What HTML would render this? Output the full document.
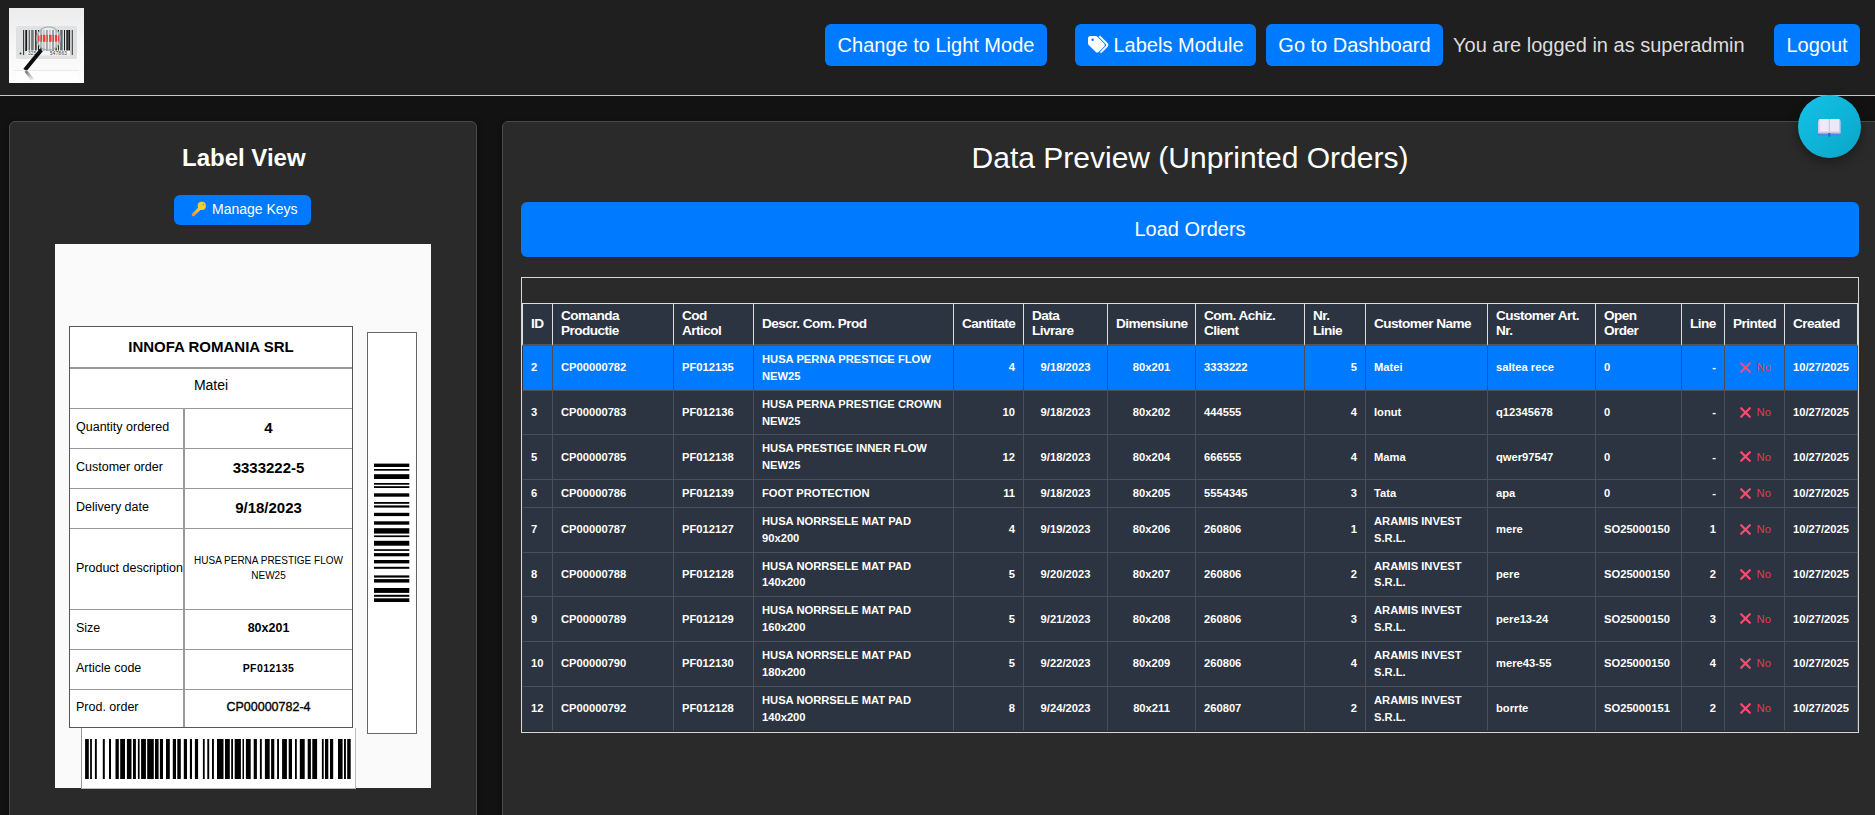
<!DOCTYPE html>
<html><head><meta charset="utf-8">
<style>
*{box-sizing:border-box}
html,body{margin:0;padding:0}
body{width:1875px;height:815px;overflow:hidden;background:#121212;font-family:"Liberation Sans",sans-serif;position:relative;color:#fff}
.hdr{position:absolute;left:0;top:0;width:1875px;height:95px;background:#1f1f1f}
.hline{position:absolute;left:0;top:95px;width:1875px;height:1px;background:#c8c8c8}
.logo{position:absolute;left:9px;top:8px;width:75px;height:75px}
.btn{position:absolute;top:24px;height:42px;background:#007bff;border-radius:6px;color:#fff;font-size:20px;line-height:42px;text-align:center;white-space:nowrap}
.who{position:absolute;left:1453px;top:24px;height:42px;line-height:42px;font-size:20px;color:#dcdcdc;white-space:nowrap}
.panel{position:absolute;top:121px;height:720px;background:#2a2a2a;border:1px solid #4a4a4a;border-radius:6px;box-shadow:0 2px 6px rgba(0,0,0,.35)}
.lp{left:9px;width:468px}
.rp{left:502px;width:1378px}
.ttl{position:absolute;font-weight:bold;font-size:24px;color:#fff;white-space:nowrap}
.mk{position:absolute;left:174px;top:195px;width:137px;height:30px;background:#007bff;border-radius:6px;font-size:14px;line-height:30px;color:#fff;white-space:nowrap}
.canvas{position:absolute;left:55px;top:244px;width:376px;height:544px;background:#fafafa}
.lt{position:absolute;left:69px;top:326px;width:284px;height:402px;background:#fff;border:1px solid #555}
.lt div{position:absolute;color:#000;white-space:nowrap}
.hl{position:absolute;left:0;height:1px;background:#999}
.vbox{position:absolute;left:367px;top:332px;width:50px;height:402px;background:#fff;border:1px solid #666}
.hbox{position:absolute;left:81px;top:728px;width:275px;height:61px;background:#fff;border:1px solid #bbb;border-left:1px solid #999;border-top:none}
.dp{position:absolute;left:521px;width:1338px;top:141px;text-align:center;font-size:30px;color:#fff;white-space:nowrap}
.load{position:absolute;left:521px;top:202px;width:1338px;height:55px;background:#007bff;border-radius:6px;font-size:20px;line-height:55px;text-align:center;color:#fff}
.tc{position:absolute;left:521px;top:277px;width:1338px;height:456px;border:1px solid #d8d8d8;background:#2a2a2a}
.fab{position:absolute;left:1798px;top:95px;width:62.5px;height:63px;border-radius:50%;background:linear-gradient(135deg,#13c3e8,#0aa5c7);box-shadow:0 4px 12px rgba(0,0,0,.35)}
.dt{position:absolute;left:522px;top:303px;border-collapse:separate;border-spacing:0;table-layout:fixed;width:1336px}
.dt th{background:#2b3440;color:#fff;font-weight:bold;font-size:13.6px;letter-spacing:-0.55px;line-height:15px;padding:4px 8px 6px;text-align:left;vertical-align:middle;border-top:1px solid #ddd;border-right:1px solid #ddd;border-bottom:2px solid #555}
.dt th:first-child{border-left:1px solid #ddd}
.dt td{background:#2b3440;color:#fff;font-weight:bold;font-size:11.2px;line-height:16.85px;padding:5px 8px;vertical-align:middle;border-right:1px solid #4a5058;border-bottom:1px solid #4a5058}
.dt td:first-child{border-left:1px solid #2f3742}
.dt tr.sel td{background:#007bff}
.dt tbody tr:last-child td{border-bottom-color:#2b3440}
.dt td.r{text-align:right}.dt td.c{text-align:center}.dt td.l{text-align:left}
.dt .x{vertical-align:-1.5px;margin-left:1.5px}
.dt .no{color:#e63950;font-weight:normal;margin-left:6px}
.lb{position:absolute;color:#000;white-space:nowrap;text-align:center}
.ll{position:absolute;left:76px;color:#000;font-size:12.5px;white-space:nowrap}
.hr{position:absolute;background:#999}
</style></head><body>
<div class="hdr"></div>
<div class="hline"></div>
<svg class="logo" viewBox="0 0 75 75">
<defs><linearGradient id="lg" x1="0" y1="0" x2="0" y2="1"><stop offset="0" stop-color="#ececec"/><stop offset="0.55" stop-color="#f7f7f7"/><stop offset="1" stop-color="#fdfdfd"/></linearGradient>
<radialGradient id="lens" cx="0.5" cy="0.5" r="0.5"><stop offset="0" stop-color="#ffffff" stop-opacity="0.55"/><stop offset="0.8" stop-color="#f4f8f8" stop-opacity="0.35"/><stop offset="1" stop-color="#b8c6c8" stop-opacity="0.9"/></radialGradient></defs>
<rect width="75" height="75" fill="url(#lg)"/>
<rect x="7" y="18" width="61" height="33" rx="2" fill="#dfe1e3"/>
<g fill="#1a1a1a"><rect x="14.2" y="22" width="0.9" height="25"/><rect x="16.3" y="22" width="1.8" height="21"/><rect x="19.8" y="22" width="0.8" height="21"/><rect x="22.1" y="22" width="2.6" height="21" fill="#777"/><rect x="26.2" y="22" width="1.4" height="21"/><rect x="29" y="22" width="1" height="21"/><rect x="31" y="22" width="2.2" height="21" fill="#555"/><rect x="34.5" y="22" width="0.9" height="21"/><rect x="37" y="22" width="1.8" height="21"/><rect x="40.5" y="22" width="0.9" height="21"/><rect x="43" y="22" width="2" height="21"/><rect x="46.5" y="22" width="1.2" height="21"/><rect x="49" y="22" width="0.9" height="21"/><rect x="51.2" y="22" width="2.4" height="21" fill="#666"/><rect x="55" y="22" width="1" height="21"/><rect x="57.3" y="22" width="1.6" height="21"/><rect x="59.3" y="22" width="1.8" height="25"/><rect x="62.8" y="22" width="0.9" height="25"/></g>
<rect x="18" y="42.5" width="43" height="5" fill="#f5f5f5"/>
<text x="19" y="47" font-family="Liberation Sans" font-size="4.6" fill="#333" letter-spacing="0.3">325</text><text x="41" y="47" font-family="Liberation Sans" font-size="4.6" fill="#333" letter-spacing="0.3">547863</text>
<circle cx="11.5" cy="45.5" r="0.9" fill="#333"/>
<circle cx="39.5" cy="30.5" r="11.3" fill="#f3f6f6" opacity="0.55"/>
<g fill="#ff1010"><rect x="28.5" y="27.5" width="2" height="6"/><rect x="31.5" y="26.8" width="1.6" height="7"/><rect x="34" y="26.8" width="2.4" height="7"/><rect x="37.5" y="26.8" width="1.4" height="7"/><rect x="40" y="26.8" width="2.6" height="7"/><rect x="43.6" y="26.8" width="1.5" height="7"/><rect x="46" y="27" width="2.2" height="6.6"/><rect x="49" y="27.5" width="1.8" height="6"/></g>
<circle cx="39.5" cy="30.5" r="11.6" fill="url(#lens)" fill-opacity="0.4" stroke="#a7b6b8" stroke-width="1.3"/>
<line x1="31" y1="43.5" x2="17.2" y2="60.5" stroke="#0d0d0d" stroke-width="4" stroke-linecap="square"/>
<rect x="7" y="62.6" width="61" height="11" fill="#ffffff" opacity=".6"/><line x1="5" y1="62.4" x2="70" y2="62.4" stroke="#d3dcdc" stroke-width="0.6"/><defs><linearGradient id="rf" x1="0" y1="0" x2="1" y2="1"><stop offset="0" stop-color="#333" stop-opacity=".85"/><stop offset="1" stop-color="#999" stop-opacity="0"/></linearGradient></defs><path d="M15.5 63.5L18.5 63L26 71.5L22 72.5Z" fill="url(#rf)"/>

</svg>
<div class="btn" style="left:825px;width:222px">Change to Light Mode</div>
<div class="btn" style="left:1075px;width:181px"><svg style="position:absolute;left:12px;top:11px" width="22" height="19" viewBox="0 0 22 19"><path d="M1 3.2C1 2 2 1 3.2 1H8.6C9.3 1 9.9 1.3 10.3 1.7L17.2 8.6C18 9.4 18 10.6 17.2 11.4L11.6 17C10.8 17.8 9.6 17.8 8.8 17L1.7 9.9C1.3 9.5 1 8.9 1 8.2Z" fill="#fff"/><circle cx="5.6" cy="4.8" r="1.25" fill="#007bff"/><path d="M12.3 1.2L19.6 8.5C20.5 9.4 20.5 10.6 19.6 11.5L13.5 17.6" stroke="#fff" stroke-width="1.9" fill="none"/></svg><span style="position:absolute;left:38.5px;top:0">Labels Module</span></div>
<div class="btn" style="left:1266px;width:177px">Go to Dashboard</div>
<div class="who">You are logged in as superadmin</div>
<div class="btn" style="left:1774px;width:86px">Logout</div>

<div class="panel lp"></div>
<div class="panel rp"></div>

<div class="ttl" style="left:182px;top:144px">Label View</div>
<div class="mk"><svg style="position:absolute;left:16px;top:6px" width="18" height="18" viewBox="0 0 18 18"><defs><linearGradient id="kg" x1="0" y1="1" x2="1" y2="0"><stop offset="0" stop-color="#ff8a3a"/><stop offset="0.6" stop-color="#fdb52e"/><stop offset="1" stop-color="#ffd93e"/></linearGradient></defs><path d="M10.2 6.8L3.4 13.6" stroke="url(#kg)" stroke-width="3.3" stroke-linecap="round"/><circle cx="11.8" cy="4.9" r="4.1" fill="#fdc936"/><circle cx="13.3" cy="3.6" r="0.8" fill="#4aa8c8"/></svg><span style="position:absolute;left:38px;top:-1px">Manage Keys</span></div>

<div class="canvas"></div>
<div class="lt"></div>
<div class="lb" style="left:70px;width:282px;top:327px;height:40px;line-height:40px;font-size:15px;font-weight:bold">INNOFA ROMANIA SRL</div>
<div class="hr" style="left:70px;width:282px;top:367px;height:2px"></div>
<div class="lb" style="left:70px;width:282px;top:366px;height:39px;line-height:39px;font-size:14px">Matei</div>
<div class="hr" style="left:70px;width:282px;top:408px;height:1px"></div>
<div class="hr" style="left:70px;width:282px;top:448px;height:1px"></div>
<div class="hr" style="left:70px;width:282px;top:488px;height:1px"></div>
<div class="hr" style="left:70px;width:282px;top:528px;height:1px"></div>
<div class="hr" style="left:70px;width:282px;top:609px;height:1px"></div>
<div class="hr" style="left:70px;width:282px;top:649px;height:1px"></div>
<div class="hr" style="left:70px;width:282px;top:689px;height:1px"></div>
<div class="hr" style="left:183px;width:2px;top:409px;height:318px"></div>
<div class="ll" style="top:408px;height:39px;line-height:39px">Quantity ordered</div>
<div class="lb" style="left:185px;width:167px;top:408px;height:39px;line-height:39px;font-size:15px;font-weight:bold">4</div>
<div class="ll" style="top:448px;height:39px;line-height:39px">Customer order</div>
<div class="lb" style="left:185px;width:167px;top:448px;height:39px;line-height:39px;font-size:15px;font-weight:bold">3333222-5</div>
<div class="ll" style="top:488px;height:39px;line-height:39px">Delivery date</div>
<div class="lb" style="left:185px;width:167px;top:488px;height:39px;line-height:39px;font-size:15px;font-weight:bold">9/18/2023</div>
<div class="ll" style="top:609px;height:39px;line-height:39px">Size</div>
<div class="lb" style="left:185px;width:167px;top:609px;height:39px;line-height:39px;font-size:12.5px;font-weight:bold">80x201</div>
<div class="ll" style="top:649px;height:39px;line-height:39px">Article code</div>
<div class="lb" style="left:185px;width:167px;top:649px;height:39px;line-height:39px;font-size:10.5px;font-weight:bold;letter-spacing:0.4px">PF012135</div>
<div class="ll" style="top:689px;height:37px;line-height:37px">Prod. order</div>
<div class="lb" style="left:185px;width:167px;top:689px;height:37px;line-height:37px;font-size:12.5px;-webkit-text-stroke:0.35px #000">CP00000782-4</div>
<div class="ll" style="top:528px;height:80px;line-height:80px">Product description</div>
<div class="lb" style="left:185px;width:167px;top:553px;line-height:15px;font-size:10px">HUSA PERNA PRESTIGE FLOW<br>NEW25</div>
<div class="vbox"><svg style="position:absolute;left:6.3px;top:130px" width="36" height="140" viewBox="0 0 36 140"><rect y="0.6" width="35.3" height="3.4"/><rect y="6.0" width="35.3" height="1.7"/><rect y="11.2" width="35.3" height="4.8"/><rect y="20.0" width="35.3" height="1.7"/><rect y="23.2" width="35.3" height="1.8"/><rect y="30.3" width="35.3" height="3.4"/><rect y="39.0" width="35.3" height="1.8"/><rect y="42.4" width="35.3" height="2.2"/><rect y="49.8" width="35.3" height="3.3"/><rect y="58.3" width="35.3" height="3.4"/><rect y="65.2" width="35.3" height="5.4"/><rect y="72.4" width="35.3" height="1.7"/><rect y="77.8" width="35.3" height="4.9"/><rect y="86.2" width="35.3" height="1.7"/><rect y="90.1" width="35.3" height="3.2"/><rect y="97.0" width="35.3" height="3.4"/><rect y="103.8" width="35.3" height="2.0"/><rect y="112.4" width="35.3" height="2.2"/><rect y="116.1" width="35.3" height="3.5"/><rect y="125.0" width="35.3" height="4.9"/><rect y="131.8" width="35.3" height="2.0"/><rect y="135.3" width="35.3" height="3.7"/></svg></div>
<div class="hbox"><svg style="position:absolute;left:-1px;top:10.5px" width="275" height="40" viewBox="0 0 275 40"><rect x="4.1" width="3.7" height="40"/><rect x="9.1" width="1.8" height="40"/><rect x="13.9" width="1.9" height="40"/><rect x="21.8" width="2.0" height="40"/><rect x="28.0" width="2.0" height="40"/><rect x="34.5" width="3.3" height="40"/><rect x="39.2" width="4.8" height="40"/><rect x="45.9" width="4.6" height="40"/><rect x="52.0" width="2.9" height="40"/><rect x="56.9" width="1.7" height="40"/><rect x="60.1" width="4.8" height="40"/><rect x="66.2" width="6.6" height="40"/><rect x="74.0" width="3.6" height="40"/><rect x="78.9" width="3.1" height="40"/><rect x="85.0" width="3.8" height="40"/><rect x="91.8" width="3.2" height="40"/><rect x="96.3" width="3.5" height="40"/><rect x="102.8" width="3.2" height="40"/><rect x="108.9" width="2.1" height="40"/><rect x="113.9" width="3.2" height="40"/><rect x="121.9" width="1.8" height="40"/><rect x="126.3" width="1.9" height="40"/><rect x="131.0" width="1.9" height="40"/><rect x="136.0" width="6.5" height="40"/><rect x="144.0" width="4.8" height="40"/><rect x="150.2" width="1.8" height="40"/><rect x="153.7" width="6.2" height="40"/><rect x="161.5" width="1.5" height="40"/><rect x="164.9" width="4.8" height="40"/><rect x="172.7" width="3.2" height="40"/><rect x="178.9" width="1.9" height="40"/><rect x="183.9" width="4.8" height="40"/><rect x="190.1" width="3.2" height="40"/><rect x="196.1" width="1.9" height="40"/><rect x="201.1" width="4.8" height="40"/><rect x="207.7" width="3.3" height="40"/><rect x="214.0" width="1.8" height="40"/><rect x="218.8" width="4.9" height="40"/><rect x="226.7" width="3.2" height="40"/><rect x="231.3" width="4.8" height="40"/><rect x="240.9" width="1.8" height="40"/><rect x="244.0" width="3.3" height="40"/><rect x="249.0" width="3.2" height="40"/><rect x="257.0" width="4.6" height="40"/><rect x="263.0" width="1.9" height="40"/><rect x="266.2" width="3.5" height="40"/></svg></div>

<div class="dp">Data Preview (Unprinted Orders)</div>
<div class="load">Load Orders</div>
<div class="tc"></div>
<table class="dt"><colgroup><col style="width:31px"><col style="width:121px"><col style="width:80px"><col style="width:200px"><col style="width:70px"><col style="width:84px"><col style="width:88px"><col style="width:109px"><col style="width:61px"><col style="width:122px"><col style="width:108px"><col style="width:86px"><col style="width:43px"><col style="width:60px"><col style="width:73px"></colgroup>
<thead><tr><th>ID</th><th>Comanda<br>Productie</th><th>Cod<br>Articol</th><th>Descr. Com. Prod</th><th>Cantitate</th><th>Data<br>Livrare</th><th>Dimensiune</th><th>Com. Achiz.<br>Client</th><th>Nr.<br>Linie</th><th>Customer Name</th><th>Customer Art.<br>Nr.</th><th>Open<br>Order</th><th>Line</th><th>Printed</th><th>Created</th></tr></thead><tbody>
<tr class="sel"><td class="l">2</td><td class="l">CP00000782</td><td class="l">PF012135</td><td class="l">HUSA PERNA PRESTIGE FLOW NEW25</td><td class="r">4</td><td class="c">9/18/2023</td><td class="c">80x201</td><td class="l">3333222</td><td class="r">5</td><td class="l">Matei</td><td class="l">saltea rece</td><td class="l">0</td><td class="r">-</td><td class="c"><svg class="x" width="11" height="11" viewBox="0 0 11 11"><path d="M1.2 1.2L9.8 9.8M9.8 1.2L1.2 9.8" stroke="#fb4b6e" stroke-width="2.2" stroke-linecap="round"/></svg><span class="no">No</span></td><td class="l">10/27/2025</td></tr>
<tr><td class="l">3</td><td class="l">CP00000783</td><td class="l">PF012136</td><td class="l">HUSA PERNA PRESTIGE CROWN NEW25</td><td class="r">10</td><td class="c">9/18/2023</td><td class="c">80x202</td><td class="l">444555</td><td class="r">4</td><td class="l">Ionut</td><td class="l">q12345678</td><td class="l">0</td><td class="r">-</td><td class="c"><svg class="x" width="11" height="11" viewBox="0 0 11 11"><path d="M1.2 1.2L9.8 9.8M9.8 1.2L1.2 9.8" stroke="#fb4b6e" stroke-width="2.2" stroke-linecap="round"/></svg><span class="no">No</span></td><td class="l">10/27/2025</td></tr>
<tr><td class="l">5</td><td class="l">CP00000785</td><td class="l">PF012138</td><td class="l">HUSA PRESTIGE INNER FLOW NEW25</td><td class="r">12</td><td class="c">9/18/2023</td><td class="c">80x204</td><td class="l">666555</td><td class="r">4</td><td class="l">Mama</td><td class="l">qwer97547</td><td class="l">0</td><td class="r">-</td><td class="c"><svg class="x" width="11" height="11" viewBox="0 0 11 11"><path d="M1.2 1.2L9.8 9.8M9.8 1.2L1.2 9.8" stroke="#fb4b6e" stroke-width="2.2" stroke-linecap="round"/></svg><span class="no">No</span></td><td class="l">10/27/2025</td></tr>
<tr><td class="l">6</td><td class="l">CP00000786</td><td class="l">PF012139</td><td class="l">FOOT PROTECTION</td><td class="r">11</td><td class="c">9/18/2023</td><td class="c">80x205</td><td class="l">5554345</td><td class="r">3</td><td class="l">Tata</td><td class="l">apa</td><td class="l">0</td><td class="r">-</td><td class="c"><svg class="x" width="11" height="11" viewBox="0 0 11 11"><path d="M1.2 1.2L9.8 9.8M9.8 1.2L1.2 9.8" stroke="#fb4b6e" stroke-width="2.2" stroke-linecap="round"/></svg><span class="no">No</span></td><td class="l">10/27/2025</td></tr>
<tr><td class="l">7</td><td class="l">CP00000787</td><td class="l">PF012127</td><td class="l">HUSA NORRSELE MAT PAD 90x200</td><td class="r">4</td><td class="c">9/19/2023</td><td class="c">80x206</td><td class="l">260806</td><td class="r">1</td><td class="l">ARAMIS INVEST S.R.L.</td><td class="l">mere</td><td class="l">SO25000150</td><td class="r">1</td><td class="c"><svg class="x" width="11" height="11" viewBox="0 0 11 11"><path d="M1.2 1.2L9.8 9.8M9.8 1.2L1.2 9.8" stroke="#fb4b6e" stroke-width="2.2" stroke-linecap="round"/></svg><span class="no">No</span></td><td class="l">10/27/2025</td></tr>
<tr><td class="l">8</td><td class="l">CP00000788</td><td class="l">PF012128</td><td class="l">HUSA NORRSELE MAT PAD 140x200</td><td class="r">5</td><td class="c">9/20/2023</td><td class="c">80x207</td><td class="l">260806</td><td class="r">2</td><td class="l">ARAMIS INVEST S.R.L.</td><td class="l">pere</td><td class="l">SO25000150</td><td class="r">2</td><td class="c"><svg class="x" width="11" height="11" viewBox="0 0 11 11"><path d="M1.2 1.2L9.8 9.8M9.8 1.2L1.2 9.8" stroke="#fb4b6e" stroke-width="2.2" stroke-linecap="round"/></svg><span class="no">No</span></td><td class="l">10/27/2025</td></tr>
<tr><td class="l">9</td><td class="l">CP00000789</td><td class="l">PF012129</td><td class="l">HUSA NORRSELE MAT PAD 160x200</td><td class="r">5</td><td class="c">9/21/2023</td><td class="c">80x208</td><td class="l">260806</td><td class="r">3</td><td class="l">ARAMIS INVEST S.R.L.</td><td class="l">pere13-24</td><td class="l">SO25000150</td><td class="r">3</td><td class="c"><svg class="x" width="11" height="11" viewBox="0 0 11 11"><path d="M1.2 1.2L9.8 9.8M9.8 1.2L1.2 9.8" stroke="#fb4b6e" stroke-width="2.2" stroke-linecap="round"/></svg><span class="no">No</span></td><td class="l">10/27/2025</td></tr>
<tr><td class="l">10</td><td class="l">CP00000790</td><td class="l">PF012130</td><td class="l">HUSA NORRSELE MAT PAD 180x200</td><td class="r">5</td><td class="c">9/22/2023</td><td class="c">80x209</td><td class="l">260806</td><td class="r">4</td><td class="l">ARAMIS INVEST S.R.L.</td><td class="l">mere43-55</td><td class="l">SO25000150</td><td class="r">4</td><td class="c"><svg class="x" width="11" height="11" viewBox="0 0 11 11"><path d="M1.2 1.2L9.8 9.8M9.8 1.2L1.2 9.8" stroke="#fb4b6e" stroke-width="2.2" stroke-linecap="round"/></svg><span class="no">No</span></td><td class="l">10/27/2025</td></tr>
<tr><td class="l">12</td><td class="l">CP00000792</td><td class="l">PF012128</td><td class="l">HUSA NORRSELE MAT PAD 140x200</td><td class="r">8</td><td class="c">9/24/2023</td><td class="c">80x211</td><td class="l">260807</td><td class="r">2</td><td class="l">ARAMIS INVEST S.R.L.</td><td class="l">borrte</td><td class="l">SO25000151</td><td class="r">2</td><td class="c"><svg class="x" width="11" height="11" viewBox="0 0 11 11"><path d="M1.2 1.2L9.8 9.8M9.8 1.2L1.2 9.8" stroke="#fb4b6e" stroke-width="2.2" stroke-linecap="round"/></svg><span class="no">No</span></td><td class="l">10/27/2025</td></tr>
</tbody></table>
<div class="fab"><svg style="position:absolute;left:20px;top:24px" width="23" height="19" viewBox="0 0 23 19">
<rect x="1" y="0" width="10" height="14.5" rx="0.6" fill="#efeaf8"/><rect x="11.6" y="0" width="10" height="14.5" rx="0.6" fill="#ece8f6"/>
<rect x="0" y="1.5" width="1.6" height="13" fill="#d3cce4"/><rect x="21" y="1.5" width="1.6" height="13" fill="#d3cce4"/>
<rect x="10.6" y="0.5" width="1.2" height="14" fill="#d8d0ea"/>
<rect x="1" y="12.6" width="20.6" height="2" fill="#cfc3e0"/>
<rect x="0" y="14.6" width="22.6" height="2.1" fill="#4f87e6"/>
<rect x="10.2" y="14" width="2.2" height="3.6" fill="#3466cf"/>
</svg></div>
</body></html>
